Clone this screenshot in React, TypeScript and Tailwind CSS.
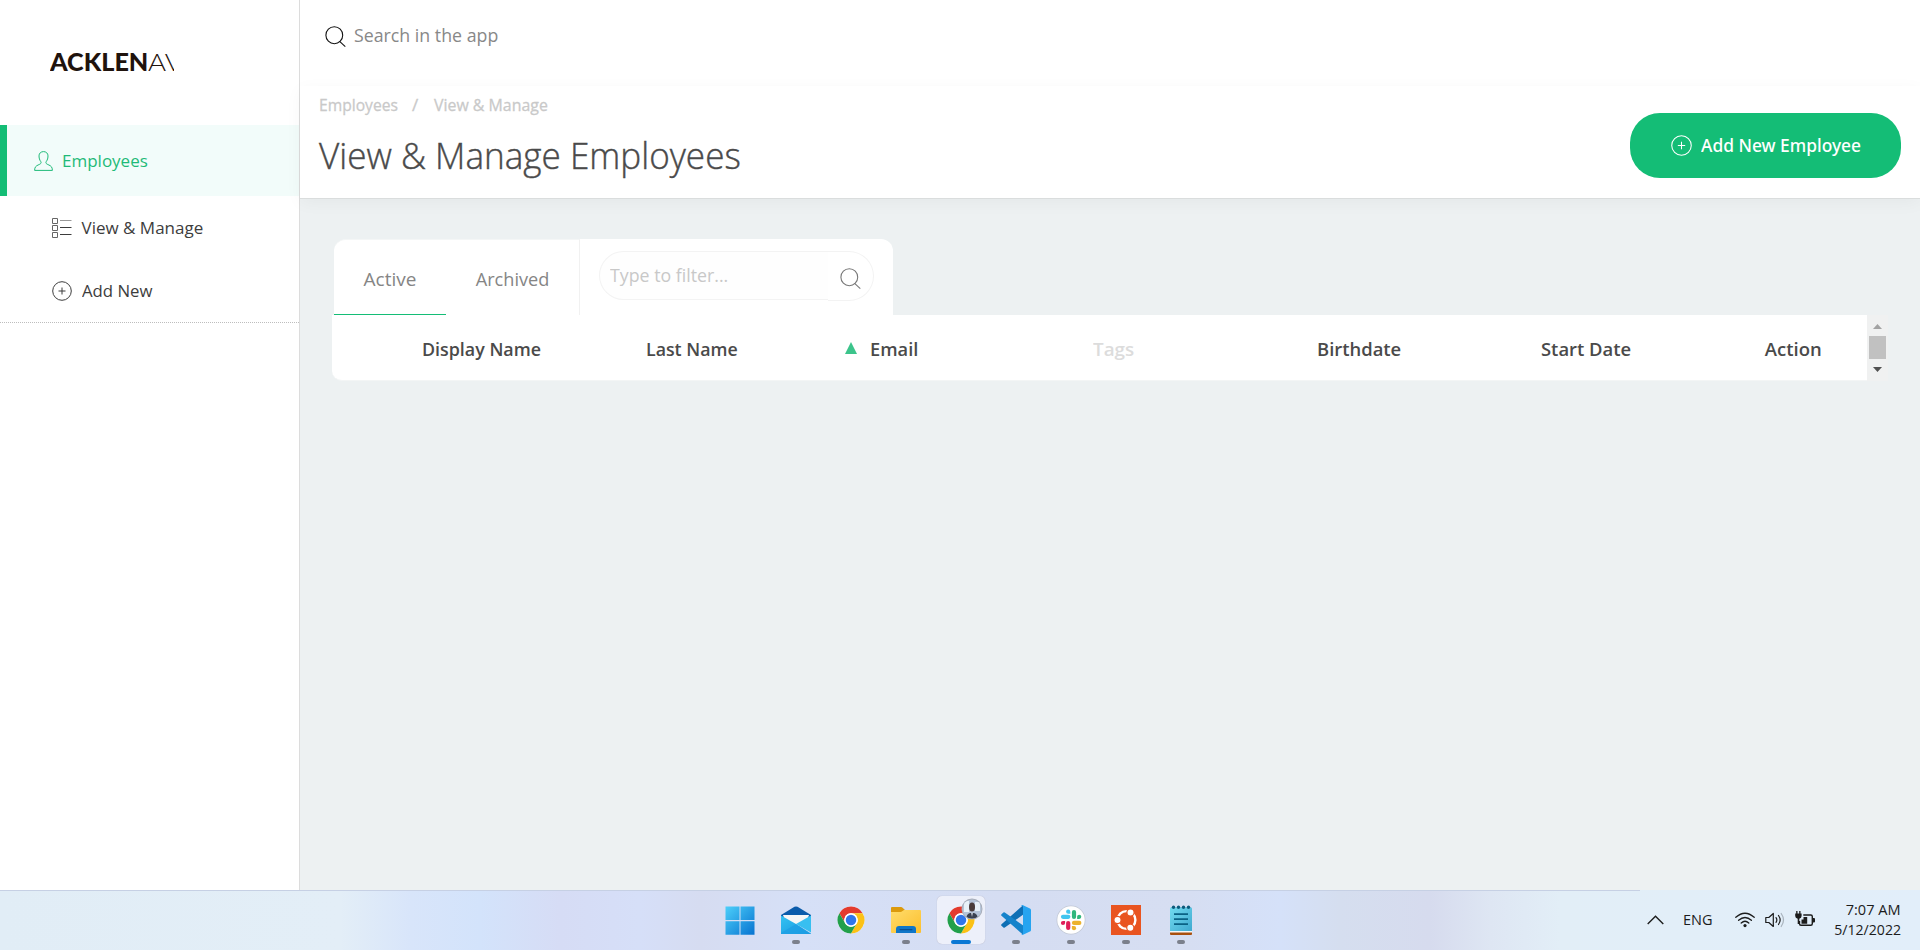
import type { ReactNode } from "react";

function SearchIcon({ className = "" }: { className?: string }) {
  return (
    <svg viewBox="0 0 21 21" className={className} fill="none" stroke="currentColor" strokeWidth="1.1">
      <ellipse cx="9.3" cy="9.2" rx="8.4" ry="8.5" />
      <path d="M14.6 15.4 20.3 20.6" />
    </svg>
  );
}

function PlusCircle({ className = "" }: { className?: string }) {
  return (
    <svg viewBox="0 0 20 20" className={className} fill="none" stroke="currentColor" strokeWidth="1">
      <circle cx="10" cy="10" r="9.3" />
      <path d="M10 6.5v7M6.5 10h7" />
    </svg>
  );
}

function UserIcon({ className = "" }: { className?: string }) {
  return (
    <svg viewBox="0 0 19 20" className={className} fill="none" stroke="currentColor" strokeWidth="1">
      <path d="M9.5.6C6.9.6 5 2.300 5 4.900c0 1.400.2 2.900.9 4.300.5 1 1.200 1.500 1.200 2.300 0 1.300-1.400 1.800-3 2.500C2.200 14.900.6 15.900.6 19.400h17.800c0-3.500-1.600-4.500-3.500-5.400-1.600-.7-3-1.200-3-2.500 0-.8.7-1.300 1.200-2.300.7-1.400.9-2.900.9-4.300C14 2.300 12.100.6 9.500.6Z" />
    </svg>
  );
}

function ListIcon({ className = "" }: { className?: string }) {
  return (
    <svg viewBox="0 0 20 20" className={className} fill="none" stroke="currentColor" strokeWidth="1">
      <path d="M.5.5h5v5h-5zM.5 7.500h5v5h-5zM.5 14.500h5v5h-5z" stroke="#666" />
      <path d="M8 2.500h11.500" stroke="#999" />
      <path d="M8 9.500h11.500M8 16.500h11.500" />
    </svg>
  );
}

function WindowsIcon() {
  return (
    <svg viewBox="0 0 30 30" className="mr-[1px] size-[30px]">
      <defs>
        <linearGradient id="win" x1="0" y1="0" x2="30" y2="30" gradientUnits="userSpaceOnUse">
          <stop offset="0" stopColor="#4fd2fb" />
          <stop offset="1" stopColor="#0672d0" />
        </linearGradient>
      </defs>
      <path fill="url(#win)" d="M.5 1.500h14v13.600h-14zM15.500 1.500h14v13.600h-14zM.5 16.200h14v13.600h-14zM15.500 16.200h14v13.600h-14z" />
    </svg>
  );
}

function MailIcon() {
  return (
    <svg viewBox="0 0 30 30" className="size-[30px]">
      <defs>
        <linearGradient id="mail" x1="0" y1="0" x2="1" y2="1">
          <stop offset="0" stopColor="#35c3f2" />
          <stop offset="1" stopColor="#1796e0" />
        </linearGradient>
      </defs>
      <path fill="#0b5cab" d="M0 10 13.500 1.800q1.500-.8 3 0L30 10v3H0z" />
      <path fill="#f6f6f6" d="M2 10h26l-2 6-11 6L4 16z" />
      <path fill="url(#mail)" d="M0 10.500 15 19 30 29H0z" />
      <path fill="#38bff0" d="M30 10.500 15 19l15 8.500z" />
      <path fill="#1d9fe4" d="M15 19 30 28.500V29H0v-1z" opacity=".75" />
    </svg>
  );
}

function ChromeIcon() {
  return (
    <svg viewBox="0 0 48 48" className="size-[28px]">
      <circle cx="24" cy="24" r="23" fill="#fff" />
      <path fill="#e33b2e" d="M4.080 12.500A23 23 0 0 1 43.920 12.500H24A11.500 11.500 0 0 0 14.040 29.750z" />
      <path fill="#fbc116" d="M43.920 12.500A23 23 0 0 1 24 47L33.960 29.750A11.500 11.500 0 0 0 24 12.500z" />
      <path fill="#22a04b" d="M24 47A23 23 0 0 1 4.080 12.500L14.040 29.750A11.500 11.500 0 0 0 33.960 29.750z" />
      <circle cx="24" cy="24" r="11.500" fill="#fff" />
      <circle cx="24" cy="24" r="9" fill="#2f76ea" />
    </svg>
  );
}

function FolderIcon() {
  return (
    <svg viewBox="0 0 30 30" className="size-[30px]">
      <defs>
        <linearGradient id="folder" x1="0" y1="0" x2="1" y2="1">
          <stop offset="0" stopColor="#ffdc6b" />
          <stop offset="1" stopColor="#fcbf2d" />
        </linearGradient>
      </defs>
      <path fill="#dc9a0c" d="M0 3q0-1 1-1h9q1 0 1.600.8L14 5v6H0z" />
      <path fill="url(#folder)" d="M0 7h9.500q1 0 1.700-.7L13 5h16q1 0 1 1v21q0 1-1 1H1q-1 0-1-1z" />
      <path fill="#0f76c8" d="M5 28v-4q0-3 3-3h14q3 0 3 3v4z" />
      <rect x="8.500" y="24" width="13" height="1.200" rx=".6" fill="#0a4f92" />
    </svg>
  );
}

function ProfileIcon() {
  return (
    <svg viewBox="0 0 22 22" className="absolute -top-[8px] left-[14px] size-[22px]">
      <defs>
        <clipPath id="face">
          <circle cx="11" cy="11" r="9.600" />
        </clipPath>
      </defs>
      <circle cx="11" cy="11" r="10.500" fill="#a8adb8" />
      <g clipPath="url(#face)">
        <path fill="#b5c4d8" d="M0 0h22v22H0z" />
        <path fill="#e8f1f8" d="M3 3h5v11H3zM14 4h5v9h-5z" />
        <path fill="#3a4150" d="M5 22q0-6 4-7h4q4 1 4 7z" />
        <ellipse cx="11" cy="9" rx="3" ry="4.500" fill="#4a3c3a" />
        <path fill="#dfe5ee" d="M10.200 15h1.600l-.8 4z" />
      </g>
    </svg>
  );
}

function CodeIcon() {
  return (
    <svg viewBox="0 0 30 30" className="size-[30px]">
      <path fill="#0e6fb5" d="M22 .3 23 9 3.800 22.500q-.7.500-1.400 0L.5 20.800q-.8-.8 0-1.600z" />
      <path fill="#1583cb" d="M22 29.700 23 21 3.800 7.500q-.7-.5-1.400 0L.5 9.200q-.8.800 0 1.600z" />
      <path fill="#27a4f0" d="M22 29.800q-1.200.4-2-.5.900.4 2-.6V1.500Q20.900.4 20 .7q.8-.9 2-.5l7 3.300q1 .5 1 1.600v19.800q0 1.100-1 1.600z" />
    </svg>
  );
}

function SlackIcon() {
  return (
    <svg viewBox="0 0 30 30" className="size-[30px]">
      <circle cx="15" cy="15" r="14.500" fill="#c3c9d6" />
      <circle cx="15" cy="15" r="13.700" fill="#fff" />
      <g strokeWidth="4.200" strokeLinecap="round">
        <path stroke="#41c5ef" d="M7 11.800h5.300" />
        <path stroke="#2fb67c" d="M18 7v5" />
        <path stroke="#ecb22e" d="M18 17.900h5.300" />
        <path stroke="#e01e5a" d="M12.200 18v5" />
      </g>
      <path fill="#41c5ef" d="M14.300 8.800h-2.100a2.100 2.100 0 1 1 2.100-2.100z" />
      <path fill="#2fb67c" d="M21.100 13.900v-2.100a2.100 2.100 0 1 1 2.100 2.100z" />
      <path fill="#ecb22e" d="M15.900 21.100H18a2.100 2.100 0 1 1-2.100 2.100z" />
      <path fill="#e01e5a" d="M9.100 15.900V18A2.100 2.100 0 1 1 7 15.900z" />
    </svg>
  );
}

function UbuntuIcon() {
  return (
    <svg viewBox="0 0 30 30" className="size-[30px]">
      <path fill="#e95420" d="M0 0h30v30H0z" />
      <circle cx="15.500" cy="15" r="8.900" fill="none" stroke="#fff" strokeWidth="2.400" />
      <g fill="#fff" stroke="#e95420" strokeWidth="1.200">
        <circle cx="6.500" cy="15" r="3.600" />
        <circle cx="19.500" cy="7.500" r="3.600" />
        <circle cx="19.300" cy="22.700" r="3.600" />
      </g>
    </svg>
  );
}

function NotepadIcon() {
  return (
    <svg viewBox="0 0 30 30" className="size-[30px]">
      <defs>
        <linearGradient id="note" x1="0" y1="0" x2="1" y2="1">
          <stop offset="0" stopColor="#72dbf0" />
          <stop offset="1" stopColor="#3fa9d0" />
        </linearGradient>
      </defs>
      <path fill="#a8500f" d="M4 27h22v2q0 1-1 1H5q-1 0-1-1z" />
      <path fill="#f4f6f8" d="M4 24h22v3.500H4z" />
      <path fill="url(#note)" d="M4 3.500q0-1 1-1h20q1 0 1 1V26H4z" />
      <path stroke="#0a6285" strokeWidth="1.700" d="M8 9.200h14M8 14.200h14M8 19.200h14" />
      <g fill="#0c5b7c">
        <circle cx="7.500" cy="2.200" r="1.700" />
        <circle cx="12.500" cy="2.200" r="1.700" />
        <circle cx="17.500" cy="2.200" r="1.700" />
        <circle cx="22.500" cy="2.200" r="1.700" />
      </g>
    </svg>
  );
}

function Task({ children, running = false }: { children: ReactNode; running?: boolean }) {
  return (
    <div className="relative flex h-full w-[55px] items-center justify-center pb-[1px]">
      {children}
      {running && <span className="absolute bottom-[6px] h-[4px] w-[8px] rounded-full bg-[#7b808c]" />}
    </div>
  );
}

function Sidebar() {
  return (
    <aside className="flex w-[300px] shrink-0 flex-col border-r border-[#dcdcdc] bg-white text-[17px] text-[#3d3d3d]">
      <div className="h-[125px] pt-[47px] pl-[50px]">
        <div className="flex w-[124px] overflow-hidden font-['Lato'] text-[24px] leading-[30px] text-[#1f130d]">
          <span className="w-[98px] shrink-0 origin-left scale-x-[1.05] font-black">ACKLEN</span>
          <span className="shrink-0 origin-left scale-x-[1.15] font-light">AV</span>
        </div>
      </div>
      <div className="flex h-[71px] items-center border-l-[7px] border-[#13bd75] bg-[#f2fcfa] pl-[27px] text-[#1fba78]">
        <UserIcon className="mr-[9px] h-[20px] w-[19px]" />
        <span className="origin-left">Employees</span>
      </div>
      <div className="flex h-[63px] items-center pl-[52px]">
        <ListIcon className="mr-[10px] size-[20px]" />
        <span className="-ml-[0.5px]">View &amp; Manage</span>
      </div>
      <div className="flex h-[63px] items-center pl-[52px]">
        <PlusCircle className="mr-[10px] size-[20px]" />
        <span className="-ml-[0.5px] origin-left scale-x-[0.985]">Add New</span>
      </div>
      <div className="border-t border-dotted border-[#bdbdbd]" />
    </aside>
  );
}

function PageHeader() {
  return (
    <header className="relative flex h-[113px] justify-between border-b border-[#dadddd] bg-white pr-[19px] pl-[19px] shadow-[0_4px_16px_rgba(0,0,0,0.04)]">
      <div>
        <div className="mt-[7px] flex h-[24px] items-center text-[17px] text-[#c9c9c9] [-webkit-text-stroke:0.3px_#c9c9c9]">
          <span className="w-[93px] origin-left scale-x-[0.92]">Employees</span>
          <span className="w-[22px]">/</span>
          <span className="origin-left scale-x-[0.935]">View &amp; Manage</span>
        </div>
        <h1 className="mt-[15px] origin-left scale-x-[0.975] text-[36px] leading-[48px] font-light whitespace-nowrap text-[#4a4a4a] [-webkit-text-stroke:0.4px_#4a4a4a]">
          View &amp; Manage Employees
        </h1>
      </div>
      <button className="mt-[27px] flex h-[65px] w-[271px] items-center rounded-[30px] bg-[#14bd76] pl-[41px] text-white">
        <PlusCircle className="mr-[9px] size-[21px] shrink-0" />
        <span className="origin-left scale-x-[0.965] font-['Noto_Sans'] text-[18px] font-medium whitespace-nowrap">Add New Employee</span>
      </button>
    </header>
  );
}

const columns = [
  { name: "Display Name", look: "scale-x-[0.965]" },
  { name: "Last Name", look: "scale-x-[0.96]" },
  { name: "Email", look: "scale-x-[0.985]" },
  { name: "Tags", look: "scale-x-[1.02] text-[#dcdcdc]" },
  { name: "Birthdate", look: "scale-x-[0.995]" },
  { name: "Start Date", look: "scale-x-[0.995]" },
  { name: "Action", look: "scale-x-[1]" },
];

function EmployeeTable() {
  return (
    <section className="pt-[40px] pl-[32px]">
      <div className="flex h-[76px] w-[561px] text-[19px] text-[#858585]">
        <div className="ml-[2px] flex w-[246px] rounded-tl-[12px] border-t border-r border-t-[#f4f6f6] border-r-[#f1f1f1] bg-white">
          <div className="flex w-[112px] items-center justify-center border-b border-[#14bd76] pt-[4px]">
            <span>Active</span>
          </div>
          <div className="flex flex-1 items-center justify-center pt-[4px]">
            <span className="scale-x-[0.955]">Archived</span>
          </div>
        </div>
        <div className="flex flex-1 rounded-tr-[12px] bg-white pt-[12px] pl-[19px]">
          <div className="flex h-[49px] w-[229px] items-center rounded-l-full border border-r-0 border-[#f3f3f3] bg-[#fefefe] pl-[10px] text-[#c8c8c8]">
            <span className="origin-left scale-x-[0.935]">Type to filter...</span>
          </div>
          <div className="flex h-[50px] w-[46px] rounded-r-full border border-l-0 border-[#f3f3f3] pt-[16px] pl-[12px] text-[#777]">
            <SearchIcon className="size-[21px]" />
          </div>
        </div>
      </div>
      <div className="flex">
        <div className="grid h-[66px] w-[1535px] grid-cols-[repeat(7,223.800px)] items-center overflow-hidden rounded-bl-[10px] border-b border-[#f3f5f5] bg-white pt-[2px] pl-[90px] text-[18.5px] font-semibold text-[#4a4a4a]">
          {columns.map((c) => (
            <div key={c.name} className="relative">
              {c.name === "Email" && (
                <svg viewBox="0 0 12 12" className="absolute top-[7px] -left-[25px] size-[12px]">
                  <path d="M6 0 12 12H0z" fill="#3cc48b" />
                </svg>
              )}
              <span className={`inline-block origin-left whitespace-nowrap ${c.look}`}>{c.name}</span>
            </div>
          ))}
        </div>
        <div className="flex h-[66px] w-[21px] flex-col items-center bg-[#f0f1f1] pt-[9px]">
          <svg viewBox="0 0 9 5" className="h-[5px] w-[9px]"><path d="M4.500 0 9 5H0z" fill="#a3a3a3" /></svg>
          <div className="mt-[7px] h-[23px] w-[17px] bg-[#c1c1c1]" />
          <svg viewBox="0 0 9 5" className="mt-[8px] h-[5px] w-[9px]"><path d="M4.500 5 9 0H0z" fill="#505050" /></svg>
        </div>
      </div>
    </section>
  );
}

function Taskbar() {
  return (
    <footer className="flex h-[60px] bg-[linear-gradient(90deg,#e1edf6_0px,#e3eef7_340px,#d8e5fa_410px,#d3e3fb_480px,#d6dcf5_560px,#d6dff8_640px,#d6dcf1_700px,#d6e0f7_800px,#d5ddf2_1000px,#d6def2_1190px,#d5e1f9_1280px,#d5deef_1340px,#d6dbee_1430px,#dee6f3_1490px,#e2eef7_1560px,#e2eefa_1920px)] text-[#1c1c1c]">
      <div className="flex w-[1640px] border-t border-[#c6d0e4] pl-[713px]">
        <Task><WindowsIcon /></Task>
        <Task running><MailIcon /></Task>
        <Task><ChromeIcon /></Task>
        <Task running><FolderIcon /></Task>
        <div className="relative flex h-full w-[55px] items-center justify-center pb-[1px]">
          <div className="flex size-[48px] items-center justify-center rounded-[5px] bg-[#edf0fa] shadow-[0_0_1px_#aab]">
            <div className="relative">
              <ChromeIcon />
              <ProfileIcon />
            </div>
          </div>
          <span className="absolute bottom-[6px] h-[4px] w-[20px] rounded-full bg-[#0a78d4]" />
        </div>
        <Task running><CodeIcon /></Task>
        <Task running><SlackIcon /></Task>
        <Task running><UbuntuIcon /></Task>
        <Task running><NotepadIcon /></Task>
      </div>
      <div className="flex flex-1 items-center pr-[19px] pb-[1px] pl-[7px]">
        <svg viewBox="0 0 17 10" className="h-[10px] w-[17px]" fill="none" stroke="#1c1c1c" strokeWidth="1.400"><path d="M.7 9 8.500 1.200 16.300 9" /></svg>
        <span className="mt-[1px] ml-[19px] w-[52px] origin-left text-[14.500px]">ENG</span>
        <svg viewBox="0 0 20 16" className="h-[16px] w-[20px]" fill="none" stroke="#1c1c1c" strokeWidth="1.300" strokeLinecap="round">
          <path d="M.8 5.300q9.200-8.200 18.400 0M3.600 8.300q6.400-5.600 12.800 0M6.200 11q3.800-3.400 7.600 0" />
          <circle cx="10" cy="13.600" r="1.600" fill="#1c1c1c" stroke="none" />
        </svg>
        <svg viewBox="0 0 20 16" className="ml-[10px] h-[16px] w-[20px]" fill="none" stroke="#1c1c1c" strokeWidth="1.200" strokeLinecap="round" strokeLinejoin="round">
          <path d="M.8 5.500h3L8.300 1.500v13L3.800 10.500h-3z" />
          <path d="M11 5.700q1.700 2.300 0 4.600M13.500 3.500q3.300 4.500 0 9" />
          <path d="M16.200 1.500q4.600 6.500 0 13" stroke="#a9b3bd" />
        </svg>
        <svg viewBox="0 0 20 17" className="ml-[10px] h-[17px] w-[20px]">
          <path fill="#1c1c1c" d="M1.200 0h1.300v2.500h1.700V0h1.300v2.500H6.600V5q0 2.200-2.300 2.700V13H2.700V7.700Q.2 7.200.2 5V2.500h1z" />
          <path fill="none" stroke="#1c1c1c" strokeWidth="1.400" d="M8.300 4h7.500q1.500 0 1.500 1.500v7.300q0 1.500-1.500 1.500H6q-1.500 0-1.500-1.500V10" />
          <path fill="#1c1c1c" d="M6.500 8.500h2V6h3.700v6.700H6.500zM18 7h1q1 0 1 1v2.500q0 1-1 1h-1z" />
        </svg>
        <div className="mb-[2px] ml-auto flex flex-col items-end text-[15px] leading-[20px]">
          <span className="origin-right scale-x-[0.970]">7:07 AM</span>
          <span className="origin-right scale-x-[0.940]">5/12/2022</span>
        </div>
      </div>
    </footer>
  );
}

export default function App() {
  return (
    <div className="flex h-[950px] w-[1920px] flex-col overflow-hidden bg-white font-['Open_Sans','Noto_Sans',sans-serif]">
      <div className="flex min-h-0 flex-1">
        <Sidebar />
        <main className="flex min-w-0 flex-1 flex-col bg-[#edf1f2]">
          <div className="flex h-[86px] shrink-0 items-center bg-white pb-[15px] pl-[25px] text-[19px] text-[#888]">
            <SearchIcon className="mt-[2px] mr-[8px] size-[21px] text-[#111]" />
            <span className="origin-left scale-x-[0.935]">Search in the app</span>
          </div>
          <PageHeader />
          <EmployeeTable />
        </main>
      </div>
      <Taskbar />
    </div>
  );
}
